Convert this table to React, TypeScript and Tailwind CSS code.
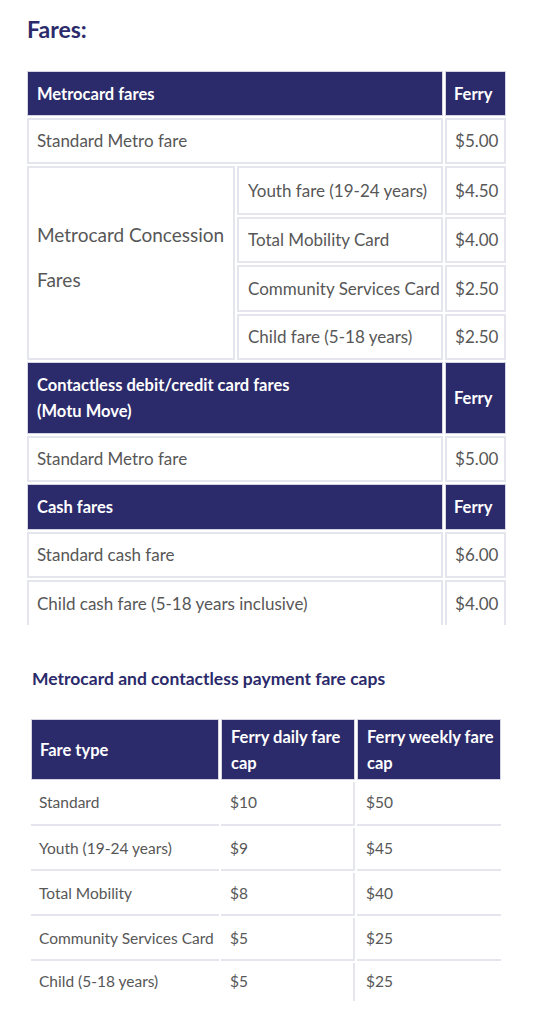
const font = { fontFamily: "Lato, 'Open Sans', sans-serif" };

const concessions = [
  { label: "Youth fare (19-24 years)", price: "$4.50", h: "h-[49px]" },
  { label: "Total Mobility Card", price: "$4.00", h: "h-[46px]" },
  { label: "Community Services Card", price: "$2.50", h: "h-[47px]" },
  { label: "Child fare (5-18 years)", price: "$2.50", h: "h-[46px]" },
];

const caps = [
  { type: "Standard", daily: "$10", weekly: "$50", h: "h-[44px]" },
  { type: "Youth (19-24 years)", daily: "$9", weekly: "$45", h: "h-[43px]" },
  { type: "Total Mobility", daily: "$8", weekly: "$40", h: "h-[43px]" },
  { type: "Community Services Card", daily: "$5", weekly: "$25", h: "h-[43px]" },
  { type: "Child (5-18 years)", daily: "$5", weekly: "$25", h: "h-[38px]" },
];

const head = "bg-[#2b2a6b] border border-[#d4d4e2] text-white font-bold text-[16.5px] leading-[26px] align-middle";
const cell = "border-2 border-[#e5e5ee] text-[#575757] text-[17px] align-middle";

function HeaderRow({ title, h }: { title: React.ReactNode; h: string }) {
  return (
    <tr className={h}>
      <td colSpan={2} className={`${head} pl-[9px]`}>
        {title}
      </td>
      <td className={`${head} pl-[8px]`}>Ferry</td>
    </tr>
  );
}

function PlainRow({ label, price, last }: { label: string; price: string; last?: boolean }) {
  return (
    <tr className={last ? "h-[45px]" : "h-[46px]"}>
      <td colSpan={2} className={`${cell} pl-[8px] ${last ? "border-b-0" : ""}`}>
        {label}
      </td>
      <td className={`${cell} pl-[8px] ${last ? "border-b-0" : ""}`}>{price}</td>
    </tr>
  );
}

export default function App() {
  return (
    <div className="w-[536px] min-h-[1024px] bg-white pt-[13px]" style={font}>
      <h2 className="ml-[27px] text-[23px] font-bold text-[#2b2a6b] leading-[32px]">Fares:</h2>

      <table className="ml-[25px] mt-[24px] table-fixed border-separate border-spacing-[2px] w-[483px]">
        <colgroup>
          <col className="w-[208px]" />
          <col className="w-[206px]" />
          <col className="w-[61px]" />
        </colgroup>
        <tbody>
          <HeaderRow title="Metrocard fares" h="h-[45px]" />
          <PlainRow label="Standard Metro fare" price="$5.00" />
          {concessions.map((c, i) => (
            <tr key={c.label} className={c.h}>
              {i === 0 && (
                <td rowSpan={4} className={`${cell} pl-[8px] text-[19px] leading-[45px] pb-[12px]`}>
                  Metrocard Concession Fares
                </td>
              )}
              <td className={`${cell} pl-[9px]`}>{c.label}</td>
              <td className={`${cell} pl-[8px]`}>{c.price}</td>
            </tr>
          ))}
          <HeaderRow
            title={
              <>
                Contactless debit/credit card fares
                <br />
                (Motu Move)
              </>
            }
            h="h-[72px]"
          />
          <PlainRow label="Standard Metro fare" price="$5.00" />
          <HeaderRow title="Cash fares" h="h-[46px]" />
          <PlainRow label="Standard cash fare" price="$6.00" />
          <PlainRow label="Child cash fare (5-18 years inclusive)" price="$4.00" last />
        </tbody>
      </table>

      <h3 className="ml-[32px] mt-[41px] text-[17.5px] font-bold text-[#2b2a6b] leading-[22px]">
        Metrocard and contactless payment fare caps
      </h3>

      <table className="ml-[29px] mt-[27px] table-fixed border-separate border-spacing-[2px] w-[474px]">
        <colgroup>
          <col className="w-[188px]" />
          <col className="w-[134px]" />
          <col className="w-[144px]" />
        </colgroup>
        <thead>
          <tr className="h-[61px]">
            <th className={`${head} text-left pl-[8px] text-[14.6px] leading-[25px]`}>Fare type</th>
            <th className={`${head} text-left pl-[9px] text-[14.6px] leading-[25px]`}>Ferry daily fare cap</th>
            <th className={`${head} text-left pl-[9px] text-[14.6px] leading-[25px]`}>Ferry weekly fare cap</th>
          </tr>
        </thead>
        <tbody>
          {caps.map((r, i) => {
            const b = i === caps.length - 1 ? "" : "border-b-2 border-[#e5e5ee]";
            return (
              <tr key={r.type} className={r.h}>
                <td className={`${b} pl-[8px] text-[15.5px] text-[#575757] align-middle`}>{r.type}</td>
                <td className={`${b} border-r-2 border-r-[#e5e5ee] pl-[9px] text-[15.5px] text-[#575757] align-middle`}>
                  {r.daily}
                </td>
                <td className={`${b} pl-[9px] text-[15.5px] text-[#575757] align-middle`}>{r.weekly}</td>
              </tr>
            );
          })}
        </tbody>
      </table>
    </div>
  );
}
